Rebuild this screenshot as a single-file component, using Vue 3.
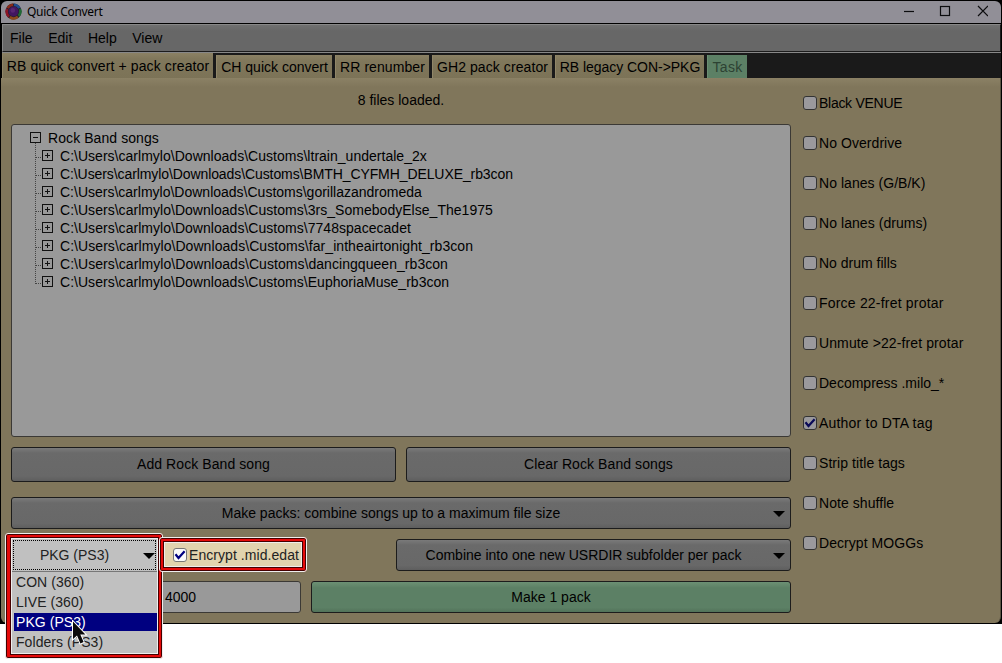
<script setup>
import { ref } from 'vue'

const menus = ['File', 'Edit', 'Help', 'View']

// track = letter spacing in px, keeps the labels at their native widths
const tabs = [
  { id: 'rb', label: 'RB quick convert + pack creator', width: 211, track: 0.12 },
  { id: 'ch', label: 'CH quick convert', width: 116, track: 0 },
  { id: 'rr', label: 'RR renumber', width: 94, track: 0.08 },
  { id: 'gh2', label: 'GH2 pack creator', width: 120, track: 0.08 },
  { id: 'legacy', label: 'RB legacy CON->PKG', width: 149, track: -0.04 },
  { id: 'task', label: 'Task', width: 40, track: 0.3 }
]
const activeTab = ref('rb')

const base = 'C:\\Users\\carlmylo\\Downloads\\Customs\\'
const songs = ref([
  { name: 'ltrain_undertale_2x', track: 0.02 },
  { name: 'BMTH_CYFMH_DELUXE_rb3con', track: -0.09 },
  { name: 'gorillazandromeda', track: 0 },
  { name: '3rs_SomebodyElse_The1975', track: 0.03 },
  { name: '7748spacecadet', track: 0.03 },
  { name: 'far_intheairtonight_rb3con', track: 0.06 },
  { name: 'dancingqueen_rb3con', track: 0.05 },
  { name: 'EuphoriaMuse_rb3con', track: 0.03 }
])

const options = ref([
  { label: 'Black VENUE', on: false, track: -0.28 },
  { label: 'No Overdrive', on: false, track: 0.06 },
  { label: 'No lanes (G/B/K)', on: false, track: 0.04 },
  { label: 'No lanes (drums)', on: false, track: 0.06 },
  { label: 'No drum fills', on: false, track: 0 },
  { label: 'Force 22-fret protar', on: false, track: 0.2 },
  { label: 'Unmute >22-fret protar', on: false, track: 0.11 },
  { label: 'Decompress .milo_*', on: false, track: 0 },
  { label: 'Author to DTA tag', on: true, track: 0.2 },
  { label: 'Strip title tags', on: false, track: 0.07 },
  { label: 'Note shuffle', on: false, track: 0.06 },
  { label: 'Decrypt MOGGs', on: false, track: 0.06 }
])

const formats = ['CON (360)', 'LIVE (360)', 'PKG (PS3)', 'Folders (PS3)']
const format = ref('PKG (PS3)')
const encrypt = ref(true)
const maxSize = ref('4000')
</script>

<template>
  <div class="screen">
    <div class="window">
      <header class="titlebar">
        <svg class="logo" width="17" height="17" viewBox="0 0 17 17">
          <circle cx="8.5" cy="8.5" r="8" fill="#26202c" />
          <g fill="none" stroke-width="2.6">
            <path d="M2.6 5.2A6.8 6.8 0 0 1 8 1.7" stroke="#8a2a18" />
            <path d="M9 1.7A6.8 6.8 0 0 1 14.4 5.2" stroke="#1c4c92" />
            <path d="M15 6.2A6.8 6.8 0 0 1 13.6 13" stroke="#1f6a35" />
            <path d="M12.8 13.8A6.8 6.8 0 0 1 4.8 14.2" stroke="#8c4a1a" />
            <path d="M4 13.6A6.8 6.8 0 0 1 2.2 6" stroke="#8c1526" />
          </g>
          <circle cx="8.5" cy="8.5" r="4.9" fill="#421660" />
          <circle cx="7.8" cy="7.4" r="2.3" fill="#582672" />
        </svg>
        <span class="title">Quick Convert</span>
        <svg class="controls" width="84" height="12" viewBox="0 0 84 12" fill="none" stroke="#0c0c0e" stroke-width="1.2">
          <path d="M0 6.5H10" />
          <rect x="36.5" y="1.5" width="9" height="9" />
          <path d="M74 1L84 11M84 1L74 11" />
        </svg>
      </header>

      <nav class="menubar">
        <span v-for="m in menus" :key="m">{{ m }}</span>
      </nav>

      <div class="tabs">
        <div
          v-for="t in tabs"
          :key="t.id"
          class="tab"
          :class="{ active: t.id === activeTab, task: t.id === 'task' }"
          :style="{ width: t.width + 'px', letterSpacing: t.track + 'px' }"
          @click="activeTab = t.id"
        >{{ t.label }}</div>
      </div>

      <main class="panel">
        <section class="left">
          <div class="status">{{ songs.length }} files loaded.</div>
          <div class="tree">
            <div class="root">
              <i class="toggle minus"></i>Rock Band songs
            </div>
            <div v-for="s in songs" :key="s.name" class="node" :style="{ letterSpacing: s.track + 'px' }">
              <i class="toggle"></i>{{ base + s.name }}
            </div>
          </div>
          <div class="row add-row">
            <div class="button">Add Rock Band song</div>
            <div class="button">Clear Rock Band songs</div>
          </div>
          <div class="row">
            <div class="button choice">Make packs: combine songs up to a maximum file size<i class="arrow"></i></div>
          </div>
          <div class="row">
            <div class="format-space"></div>
            <div class="button choice combine">Combine into one new USRDIR subfolder per pack<i class="arrow"></i></div>
          </div>
          <div class="row">
            <div class="input">{{ maxSize }}</div>
            <div class="button make">Make 1 pack</div>
          </div>
        </section>

        <aside class="options">
          <div
            v-for="o in options"
            :key="o.label"
            class="check"
            :style="{ letterSpacing: o.track + 'px' }"
            @click="o.on = !o.on"
          >
            <span class="box">
              <svg v-if="o.on" width="12" height="12" viewBox="0 0 12 12"><path d="M1.5 5.3L4.5 9L10.6 2.3" /></svg>
            </span>{{ o.label }}
          </div>
        </aside>
      </main>
    </div>

    <div class="callout format">
      <div class="frame">
        <div class="choice current">{{ format }}<i class="arrow"></i></div>
        <div class="popup">
          <div
            v-for="f in formats"
            :key="f"
            class="item"
            :class="{ selected: f === format }"
            @click="format = f"
          >{{ f }}</div>
        </div>
      </div>
    </div>

    <div class="callout encrypt">
      <div class="frame check lit" @click="encrypt = !encrypt">
        <span class="box">
          <svg v-if="encrypt" width="12" height="12" viewBox="0 0 12 12"><path d="M1.5 5.3L4.5 9L10.6 2.3" /></svg>
        </span>Encrypt .mid.edat
      </div>
    </div>

    <svg class="cursor" width="19" height="26" viewBox="0 0 19 26">
      <path d="M2 1.5V19L6 15.5L9.4 23.4L12.6 22L9.3 14.4H14.4Z" />
    </svg>
  </div>
</template>

<style>
body {
  background: #fff;
  overflow: hidden;
}
</style>

<style scoped>
.screen {
  position: relative;
  width: 1002px;
  height: 663px;
  font-family: "Liberation Sans", Arial, sans-serif;
  font-size: 14px;
  line-height: 18px;
  color: #000;
  white-space: pre;
  cursor: default;
}

.screen * {
  box-sizing: border-box;
}

.window {
  display: flex;
  flex-direction: column;
  height: 624px;
  padding: 1px;
  background: #000;
}

.titlebar {
  display: flex;
  align-items: center;
  height: 22px;
  padding: 0 13px 0 4px;
  background: #918f97;
  border-radius: 6px 6px 0 0;
}

.logo {
  margin-top: -2px;
}

.title {
  margin-left: 5px;
  font-family: "Noto Sans", "Open Sans", sans-serif;
  font-size: 12px;
  letter-spacing: -0.32px;
}

.controls {
  margin: -2px 0 0 auto;
}

.menubar {
  display: flex;
  align-items: center;
  gap: 15.6px;
  height: 28px;
  margin: 1px 0 0 1px;
  padding-left: 7px;
  background: linear-gradient(#707070, #676767 6px, #676767);
  border: 1px solid #1c1c1c;
  border-top-color: #888;
  border-left-color: #888;
}

.tabs {
  display: flex;
  align-items: flex-end;
  gap: 3px;
  height: 26px;
  margin-left: 1px;
  background: #1a1a1a;
  border-top: 1px solid #888;
}

.tab {
  height: 23px;
  line-height: 25px;
  text-align: center;
  background: linear-gradient(#8b8164, #80775b 6px, #7c7357);
  border-left: 1px solid #918769;
}

.tab.active {
  height: 25px;
  line-height: 26px;
}

.tab.task {
  color: #2d4233;
  background: #5c8065;
  border-color: #6b8e72;
}

.panel {
  display: flex;
  flex: 1;
  padding: 0 0 0 10px;
  background: linear-gradient(#8b8165, #80765b 9px, #80765b);
  border-radius: 0 0 6px 6px;
  border-right: 1px solid #5b5544;
}

.left {
  display: flex;
  flex-direction: column;
  gap: 10px;
  width: 780px;
}

.status {
  height: 36px;
  padding-top: 13px;
  text-align: center;
}

.tree {
  height: 313px;
  padding: 4px 0 0 18px;
  background: #999;
  border: 1px solid #3b3935;
  border-radius: 3px;
}

.root,
.node {
  display: flex;
  align-items: center;
  height: 18px;
}

.root {
  letter-spacing: 0.08px;
}

.node {
  position: relative;
  padding-left: 12px;
}

/* dotted connector lines between the parent and its children */
.node::before {
  content: "";
  position: absolute;
  left: 5px;
  top: -4px;
  width: 7px;
  height: 14px;
  border-left: 1px dotted #444;
  border-bottom: 1px dotted #444;
}

.node + .node::before {
  top: -8px;
  height: 18px;
}

.toggle {
  position: relative;
  top: -1px;
  width: 11px;
  height: 11px;
  margin-right: 7px;
  border: 1px solid #111;
}

.toggle::before,
.toggle::after {
  content: "";
  position: absolute;
  background: #111;
}

.toggle::before {
  left: 2px;
  top: 4px;
  width: 5px;
  height: 1px;
}

.toggle::after {
  left: 4px;
  top: 2px;
  width: 1px;
  height: 5px;
}

.toggle.minus::after {
  display: none;
}

.row {
  display: flex;
  gap: 10px;
  height: 32px;
}

.add-row {
  height: 35px;
  margin-bottom: 5px;
}

.button {
  display: flex;
  flex: 1;
  align-items: center;
  justify-content: center;
  background: linear-gradient(#7a7a7a, #6a6a6a 5px, #686868 85%, #5e5e5e);
  border: 1px solid #1c1c1c;
  border-radius: 3px;
}

.add-row .button {
  padding-bottom: 1px;
  letter-spacing: 0.08px;
}

.choice {
  position: relative;
  padding-right: 20px;
}

.arrow {
  position: absolute;
  right: 5px;
  top: 50%;
  margin-top: -2px;
  border: 6px solid transparent;
  border-top-color: #000;
  border-bottom: 0;
}

.format-space {
  width: 375px;
}

.button.combine {
  flex: 0 0 395px;
}

.input {
  width: 290px;
  padding-left: 153px;
  line-height: 30px;
  background: #999;
  border: 1px solid #3b3935;
  border-radius: 3px;
}

.button.make {
  background: linear-gradient(#6c9074, #5c8065 6px, #5c8065 85%, #52735a);
}

.options {
  display: flex;
  flex-direction: column;
  gap: 20px;
  padding: 15px 0 0 12px;
}

.check {
  display: flex;
  align-items: center;
  height: 20px;
}

.box {
  display: flex;
  align-items: center;
  justify-content: center;
  width: 14px;
  height: 14px;
  margin-right: 2px;
  background: #9a999d;
  border: 1px solid #333;
  border-radius: 3px;
}

.box svg {
  flex: none;
}

.box path {
  fill: none;
  stroke: #0a0a58;
  stroke-width: 2.2;
}

/* bright red frames lying over the dimmed window */
.callout {
  position: absolute;
  padding: 4px;
  background: #e60a0a;
  border: 1px solid #eee;
  border-radius: 3px;
  box-shadow: inset 0 0 0 1px #400;
}

.frame {
  border: 1px solid #eee;
  outline: 1px solid #400;
}

.callout.format {
  left: 5px;
  top: 533px;
  width: 158px;
  height: 126px;
  padding-left: 5px;
}

.callout.encrypt {
  left: 159px;
  top: 537px;
  width: 148px;
  height: 35px;
}

.current {
  display: flex;
  align-items: center;
  justify-content: center;
  height: 32px;
  color: #222;
  background: #c0c0c0;
  outline: 1px dotted #000;
  outline-offset: -2px;
}

.current .arrow {
  right: 2px;
}

.popup {
  height: 82px;
  padding: 1px 0 0 2px;
  background: #c0c0c0;
  border-top: 1px solid #777;
}

.item {
  height: 18px;
  margin: 0 0 2px;
  padding-left: 2px;
  color: #222;
  letter-spacing: 0.06px;
}

.item.selected {
  color: #fff;
  background: #000080;
}

.check.lit {
  height: 25px;
  padding-left: 8px;
  color: #222;
  background: #e2d3ae;
  letter-spacing: 0.06px;
}

.lit .box {
  background: #fafafa;
  border-color: #777;
}

.lit path {
  stroke: #000080;
}

.cursor {
  position: absolute;
  left: 71px;
  top: 620px;
}

.cursor path {
  fill: #0a0a0a;
  stroke: #fff;
  stroke-width: 2;
  paint-order: stroke;
}
</style>
